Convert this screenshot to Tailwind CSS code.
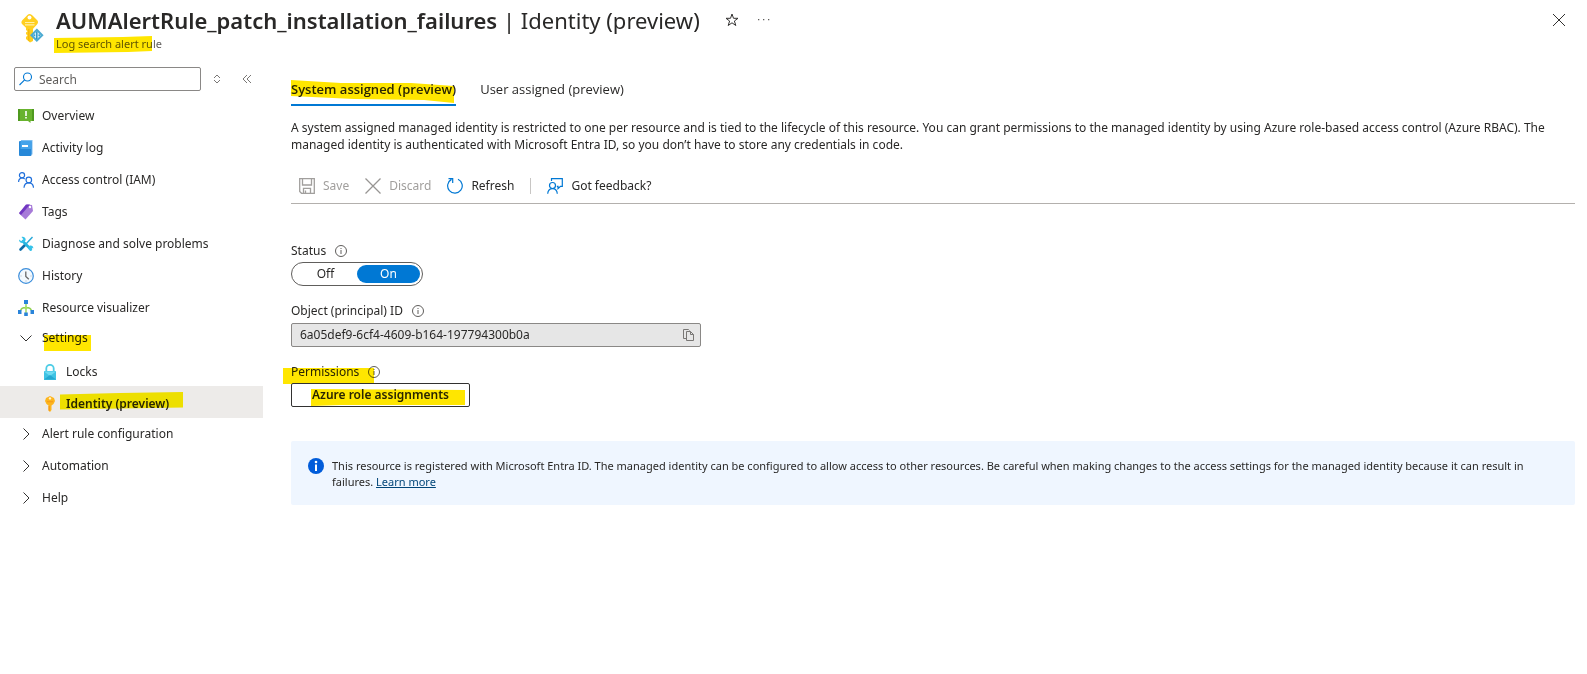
<!DOCTYPE html>
<html lang="en">
  <head>
    <meta charset="UTF-8" />
    <meta name="viewport" content="width=device-width, initial-scale=1.0" />
    <script src="https://cdn.jsdelivr.net/npm/@tailwindcss/browser@4"></script>
    <title>AUMAlertRule_patch_installation_failures | Identity (preview)</title>
  </head>
  <body class="min-h-screen bg-white font-['Noto_Sans','Open_Sans',sans-serif] text-[12px] text-[#292827]">
    <header class="flex items-start pt-1 pr-5 pl-[17px]">
      <svg class="mt-2 h-8 w-7 shrink-0" viewBox="0 0 28 32">
        <path fill="#ffcf1f" d="M12.500 2C14 2 15 3 16.500 4.500L20 8c1.400 1.400 1.400 3 0 4.500L17.200 15.500c-.7.700-1.200 1-1.200 2V29l-3 1.500L9 27v-2l1.500-1.500L9 22v-1.500l1.500-1.200L9 18v-2.200L5.500 12.500C4 11 4 9.500 5.500 8L9 4.500C10.500 3 11 2 12.500 2z" />
        <path fill="#f5b90f" d="M11 17h1.500v12.500L11 28.500z" />
        <circle cx="12.500" cy="5.500" r="2" fill="#fff" />
        <path stroke="#fff0a8" stroke-width="1.200" d="M8 10.500h9.500M8 12.800h9.500" />
        <path fill="#d4eefa" stroke="#4cabd2" stroke-width="2" d="M19.800 17.800l5.400 5.400-5.400 5.400-5.400-5.400z" />
        <path stroke="#2490c4" stroke-width="1.400" d="M19.800 19.500v7.500" />
        <circle cx="17.300" cy="23.200" r="1" fill="#3a9fce" /><circle cx="22.300" cy="23.200" r="1" fill="#3a9fce" />
      </svg>
      <div class="ml-[11px]">
        <h1 class="text-[22px] leading-8"><span class="font-semibold">AUMAlertRule_patch_installation_failures</span> | Identity (preview)</h1>
        <p class="relative w-fit text-[11px] leading-4 text-[#605e5c]">
          Log search alert rule
          <svg class="absolute top-0 -left-[3px] h-[17px] w-[99px] mix-blend-multiply" viewBox="0 0 99 17">
            <path fill="#ffe600" d="M1 2L70 1l29-1v15l-24 1-74 1z" />
          </svg>
        </p>
      </div>
      <button class="mt-2 ml-6" aria-label="Favorite">
        <svg class="h-4 w-4" viewBox="0 0 16 16" fill="none" stroke="#323130">
          <path d="M8 2l1.500 4.300H14l-3.600 2.700 1.400 4.500L8 10.800l-3.800 2.700L5.600 9 2 6.300h4.500z" />
        </svg>
      </button>
      <button class="mt-2 ml-4" aria-label="More">
        <svg class="h-4 w-4" viewBox="0 0 16 16" fill="#605e5c">
          <path d="M2 7h1.300v1.300H2zM7 7h1.300v1.300H7zM12 7h1.300v1.300H12z" />
        </svg>
      </button>
      <button class="mt-2 ml-auto" aria-label="Close">
        <svg class="h-4 w-4" viewBox="0 0 16 16" stroke="#323130"><path d="M2 2l12 12M14 2L2 14" /></svg>
      </button>
    </header>

    <div class="flex">
      <aside class="w-[263px] shrink-0 pt-[15px]">
        <div class="flex items-center pl-3.5">
          <div class="relative">
            <svg class="absolute top-1 left-1 h-4 w-4" viewBox="0 0 16 16" fill="none" stroke="#0078d4" stroke-width="1.100">
              <circle cx="9.500" cy="6" r="4" /><path d="M6.600 8.900L1.500 14" />
            </svg>
            <input type="text" placeholder="Search" aria-label="Search" class="block h-6 w-[187px] rounded-xs border border-[#8a8886] pl-6 placeholder:text-[#605e5c]" />
          </div>
          <button class="ml-2" aria-label="Expand or collapse all">
            <svg class="h-4 w-4" viewBox="0 0 16 16" fill="none" stroke="#797775"><path d="M5 7l3-3 3 3M5 9l3 3 3-3" /></svg>
          </button>
          <button class="ml-3.5" aria-label="Collapse menu">
            <svg class="h-4 w-4" viewBox="0 0 16 16" fill="none" stroke="#797775"><path d="M8 4L4 8l4 4M12 4L8 8l4 4" /></svg>
          </button>
        </div>

        <nav class="mt-[7px]">
          <a href="#" class="flex h-8 items-center gap-2 pt-[3px] pl-[18px]">
            <svg class="h-4 w-4" viewBox="0 0 16 16">
              <path fill="#68b32e" d="M0 1h16v12h-3.500v2L10 13H0z" /><path fill="#4f9a1f" d="M0 1h2v12H0zM14 1h2v12h-2z" />
              <path fill="#fff" d="M7.200 3h1.600v5H7.200zM7.200 9h1.600v1.500H7.200z" />
            </svg>
            Overview
          </a>
          <a href="#" class="flex h-8 items-center gap-2 pt-[3px] pl-[18px]">
            <svg class="h-4 w-4" viewBox="0 0 16 16">
              <path fill="#7dbdf0" d="M3 0h11.500v14.500H3z" /><rect x="1" y="1" width="12.500" height="15" rx="1" fill="#2788d8" /><path fill="#45a3ea" d="M2.500 1h11v8h-11z" /><path fill="#fff" d="M4 5h6v2H4z" />
            </svg>
            Activity log
          </a>
          <a href="#" class="flex h-8 items-center gap-2 pt-[3px] pl-[18px]">
            <svg class="h-4 w-4" viewBox="0 0 16 16" fill="none" stroke="#1f6fdb" stroke-width="1.200">
              <circle cx="4" cy="3.200" r="2.600" /><path d="M.6 10c0-2.500 1.500-4 3.500-4 1.200 0 2 .4 2.600 1" />
              <circle cx="10.800" cy="8" r="2.800" /><path d="M6 15.800c.2-3 2-4.900 4.800-4.900s4.500 1.900 4.700 4.900" />
            </svg>
            Access control (IAM)
          </a>
          <a href="#" class="flex h-8 items-center gap-2 pt-[3px] pl-[18px]">
            <svg class="h-4 w-4" viewBox="0 0 16 16">
              <path fill="#a77bd8" d="M9 .5L14 1l1 6-7.500 8.500L1 9.500z" /><path fill="#7136c2" d="M8 .5h4L3 11 1 9z" /><circle cx="12" cy="3" r="1.200" fill="#fff" />
            </svg>
            Tags
          </a>
          <a href="#" class="flex h-8 items-center gap-2 pt-[3px] pl-[18px]">
            <svg class="h-4 w-4" viewBox="0 0 16 16" fill="none">
              <path stroke="#0c6ca8" stroke-width="2.600" stroke-linecap="round" d="M2.500 13.500L7.500 8.500" /><path stroke="#28a8d8" stroke-width="1.400" d="M7.500 8.500L14.500 1" />
              <path stroke="#25b5df" stroke-width="2.600" d="M4 4.500l9.500 9.500" />
              <path fill="#35c3ea" d="M1 3.500L3 5l2-.2L5.200 3 3.500 1c2-.8 4.500.7 4.200 3.200L5 7C2.500 7.300.8 5.500 1 3.500zM10 11l2-1.500c2-.3 3.500 1 3.300 3L14 11.800l-1.400 1.400L14 15c-2 .2-4-1.500-4-4z" />
            </svg>
            Diagnose and solve problems
          </a>
          <a href="#" class="flex h-8 items-center gap-2 pt-[3px] pl-[18px]">
            <svg class="h-4 w-4" viewBox="0 0 16 16" fill="none">
              <circle cx="8" cy="8" r="7.300" fill="#f3f9fe" stroke="#3c8edb" stroke-width="1.200" />
              <path stroke="#6a6a6a" stroke-width="1.300" d="M7.800 3.500v5l3 2.800" /><path stroke="#a9b6c2" d="M2.500 8h1M12.500 8h1M8 12.500v1" />
            </svg>
            History
          </a>
          <a href="#" class="flex h-8 items-center gap-2 pt-[3px] pl-[18px]">
            <svg class="h-4 w-4" viewBox="0 0 16 16" fill="none">
              <path stroke="#8fd14f" stroke-width="1.300" d="M8 4v9M2.500 11c.3-2.500 2-3.500 5.500-3.500s5.200 1 5.500 3.500" /><circle cx="8" cy="7.800" r="1.500" fill="#a5e060" />
              <path fill="#2a84da" d="M6 0h4v4H6zM0 10h3.500v4H0zM12.500 10H16v4h-3.500zM6.200 12.500h3.600V16H6.200z" />
            </svg>
            Resource visualizer
          </a>
          <a href="#" class="flex h-8 items-center gap-2 pl-[18px]">
            <svg class="h-4 w-4" viewBox="0 0 16 16" fill="none" stroke="#323130"><path d="M2.500 5.500L8 11l5.500-5.500" /></svg>
            <span class="relative">
              Settings
              <svg class="absolute top-1.5 left-0.5 h-4 w-[47px] mix-blend-multiply" viewBox="0 0 47 16"><path fill="#ffe600" d="M0 0h47v16H0z" /></svg>
            </span>
          </a>
          <a href="#" class="flex h-8 items-center gap-2 pt-[3px] pl-[42px]">
            <svg class="h-4 w-4" viewBox="0 0 16 16" fill="none">
              <path stroke="#4fcde6" stroke-width="1.800" d="M4.300 8V4.500a3.700 3.700 0 017.400 0V8" />
              <rect x="2" y="7" width="12" height="9" rx=".6" fill="#3fc3e4" /><path fill="#6fdcf2" d="M2 7.500L8 12l6-4.500z" /><path fill="#24a8d0" d="M2 15.500L8 11l6 4.500z" />
            </svg>
            Locks
          </a>
          <a href="#" class="flex h-8 items-center gap-2 bg-[#edebe9] pt-[3px] pl-[42px] font-semibold">
            <svg class="h-4 w-4" viewBox="0 0 16 16">
              <path fill="#fdb51c" d="M8 0l4 2 1 3-1.500 3L9.500 9.500V14L8 16l-1.500-1.500v-5L4.500 8 3 5l1-3z" /><circle cx="8" cy="2.400" r="1.200" fill="#fff3d0" /><path fill="#f79d17" d="M5 5h6v1.200H5zM6.500 10H8v5l-1.500-.5z" />
            </svg>
            <span class="relative">
              Identity (preview)
              <svg class="absolute -top-[3px] -left-1.5 h-[18px] w-[123px] mix-blend-multiply" viewBox="0 0 123 18"><path fill="#fff200" d="M0 2.500L60 1l63-1v15.500L0 17.500z" /></svg>
            </span>
          </a>
          <a href="#" class="flex h-8 items-center gap-2 pl-[18px]">
            <svg class="h-4 w-4" viewBox="0 0 16 16" fill="none" stroke="#323130"><path d="M5.500 2.500L11 8l-5.500 5.500" /></svg>
            Alert rule configuration
          </a>
          <a href="#" class="flex h-8 items-center gap-2 pl-[18px]">
            <svg class="h-4 w-4" viewBox="0 0 16 16" fill="none" stroke="#323130"><path d="M5.500 2.500L11 8l-5.500 5.500" /></svg>
            Automation
          </a>
          <a href="#" class="flex h-8 items-center gap-2 pl-[18px]">
            <svg class="h-4 w-4" viewBox="0 0 16 16" fill="none" stroke="#323130"><path d="M5.500 2.500L11 8l-5.500 5.500" /></svg>
            Help
          </a>
        </nav>
      </aside>

      <main class="min-w-0 flex-1 pt-7 pr-3 pl-7">
        <div class="flex gap-6 font-['Open_Sans',sans-serif] text-[13px]" role="tablist">
          <button role="tab" aria-selected="true" class="relative h-[26px] border-b-2 border-[#0078d4] pb-1.5 font-semibold">
            System assigned (preview)
            <svg class="absolute top-0 left-0 h-[23px] w-[163px] mix-blend-multiply" viewBox="0 0 163 23"><path fill="#ffe600" d="M0 0l50 3 70 0 43 3v17l-30-3-70-1L0 16z" /></svg>
          </button>
          <button role="tab" aria-selected="false" class="h-[26px] border-b-2 border-transparent pb-1.5">User assigned (preview)</button>
        </div>

        <p class="mt-[13px] leading-[17px]">
          A system assigned managed identity is restricted to one per resource and is tied to the lifecycle of this resource. You can grant permissions to the managed identity by using Azure role-based access control (Azure RBAC). The managed identity is authenticated with Microsoft Entra ID, so you don’t have to store any credentials in code.
        </p>

        <div class="mt-[15px] flex h-9 items-center border-b border-[#b3b0ad] pl-2">
          <button disabled class="flex items-center gap-2 text-[#a19f9d]">
            <svg class="h-4 w-4" viewBox="0 0 16 16" fill="none" stroke="#a19f9d" stroke-width="1.300">
              <path d="M.7.700h14.600v14.600H2.500L.7 13.500zM3.500.700v6.300h9V.700M4.500 15.300v-5h7v5M6.500 12.500v2.500" />
            </svg>
            Save
          </button>
          <button disabled class="ml-4 flex items-center gap-2 text-[#a19f9d]">
            <svg class="h-4 w-4" viewBox="0 0 16 16" stroke="#979593" stroke-width="1.300"><path d="M.5.500l15 15M15.500.500l-15 15" /></svg>
            Discard
          </button>
          <button class="ml-4 flex items-center gap-2">
            <svg class="h-4 w-4" viewBox="0 0 16 16" fill="none" stroke="#0078d4" stroke-width="1.200">
              <path d="M11 1.200a7.300 7.300 0 11-6.500.200M1.500.700h4.200v4.200" />
            </svg>
            Refresh
          </button>
          <span class="ml-4 h-4 w-px bg-[#c8c6c4]"></span>
          <button class="ml-4 flex items-center gap-2">
            <svg class="h-4 w-4" viewBox="0 0 16 16" fill="none" stroke="#0078d4" stroke-width="1.200">
              <circle cx="5.500" cy="7.500" r="3" /><path d="M.7 15.800c.2-3 2-5.200 4.800-5.200s4.600 2.200 4.800 5.200" /><path d="M4.500 3V.7h10.800v7.600h-1.800l-2.500 2.400V8.300H9.800" />
            </svg>
            Got feedback?
          </button>
        </div>

        <div class="mt-[38px] flex items-center gap-2">
          <span id="status-label" class="leading-[18px]">Status</span>
          <svg class="h-3.5 w-3.5" viewBox="0 0 14 14" fill="none" stroke="#605e5c"><circle cx="7" cy="7" r="5.500" /><path d="M7 6v4M7 4v1" /></svg>
        </div>
        <div role="radiogroup" aria-labelledby="status-label" class="mt-0.5 flex h-6 w-[132px] rounded-full border border-[#605e5c] p-0.5">
          <label class="flex flex-1 items-center justify-center rounded-full has-checked:bg-[#0078d4] has-checked:text-white">
            <input type="radio" name="status" class="sr-only" />Off
          </label>
          <label class="flex flex-1 items-center justify-center rounded-full has-checked:bg-[#0078d4] has-checked:text-white">
            <input type="radio" name="status" checked class="sr-only" />On
          </label>
        </div>

        <div class="mt-4 flex items-center gap-2">
          <label for="object-id" class="leading-[18px]">Object (principal) ID</label>
          <svg class="h-3.5 w-3.5" viewBox="0 0 14 14" fill="none" stroke="#605e5c"><circle cx="7" cy="7" r="5.500" /><path d="M7 6v4M7 4v1" /></svg>
        </div>
        <div class="relative mt-[3px] w-[410px]">
          <input id="object-id" type="text" readonly value="6a05def9-6cf4-4609-b164-197794300b0a" class="block h-6 w-full rounded-xs border border-[#8a8886] bg-[#e6e6e6] px-2 pb-0.5" />
          <button class="absolute top-1 right-1" aria-label="Copy">
            <svg class="h-4 w-4" viewBox="0 0 16 16" fill="none" stroke="#797775"><path d="M5.500 11.500h-3v-9h5l1 1M5.500 4.500h4l3 3v6h-7zM9.500 4.500v3h3" /></svg>
          </button>
        </div>

        <div class="mt-4 flex items-center">
          <span class="relative flex items-center gap-2 leading-[18px]">
            Permissions
            <svg class="h-3.5 w-3.5" viewBox="0 0 14 14" fill="none" stroke="#605e5c"><circle cx="7" cy="7" r="5.500" /><path d="M7 6v4M7 4v1" /></svg>
            <svg class="absolute top-[5px] -left-2 h-4 w-[91px] mix-blend-multiply" viewBox="0 0 91 16"><path fill="#ffe600" d="M0 0h91v16H0z" /></svg>
          </span>
        </div>
        <button class="relative mt-0.5 block h-6 w-[179px] rounded-xs border border-[#323130] font-semibold">
          Azure role assignments
          <svg class="absolute top-[5px] left-[19px] h-[17px] w-[154px] mix-blend-multiply" viewBox="0 0 154 17"><path fill="#ffe600" d="M0 0l154 1v15H30L0 17z" /></svg>
        </button>

        <div class="mt-[34px] flex h-16 gap-2 rounded-xs bg-[#eff6ff] pt-[17px] pr-4 pl-[17px] text-[11px] leading-4">
          <svg class="h-4 w-4 shrink-0" viewBox="0 0 16 16"><circle cx="8" cy="8" r="8" fill="#015cda" /><circle cx="8" cy="4" r="1.300" fill="#fff" /><path fill="#fff" d="M7 6.500h2v6.500H7z" /></svg>
          <p>
            This resource is registered with Microsoft Entra ID. The managed identity can be configured to allow access to other resources. Be careful when making changes to the access settings for the managed identity because it can result in failures.
            <a href="#" class="text-[#004578] underline">Learn more</a>
          </p>
        </div>
      </main>
    </div>
  </body>
</html>
